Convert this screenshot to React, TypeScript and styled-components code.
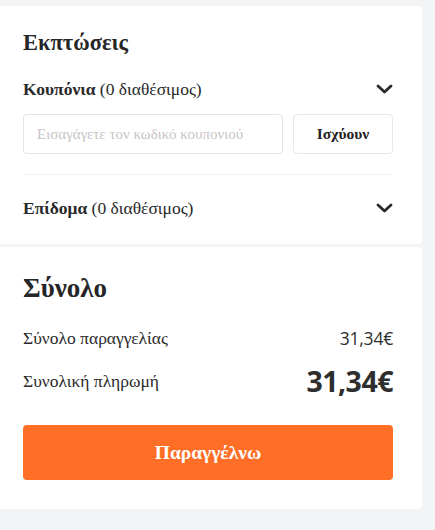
import React from 'react';
import styled, { createGlobalStyle } from 'styled-components';

/*
 * Styles
 */
const GlobalStyle = createGlobalStyle`
  body {
    margin: 0;
    background: #f3f4f6;
    font-family: "Liberation Serif", "Times New Roman", serif;
    color: #2a2a2a;
  }
`;

const Page = styled.div`
  padding: 6px 13px 0 0;
  display: flex;
  flex-direction: column;
  gap: 3px;
`;

const Card = styled.section<{ $bottom: number }>`
  background: #fff;
  border-radius: 0 4px 4px 0;
  padding: 24px 29px ${p => p.$bottom}px 23px;
  display: flex;
  flex-direction: column;
`;

const Title = styled.h2<{ $size: number; $lh: number }>`
  margin: 0;
  font-size: ${p => p.$size}px;
  line-height: ${p => p.$lh}px;
  font-weight: 700;
  color: #262626;
`;

const Toggle = styled.div<{ $top: number }>`
  margin-top: ${p => p.$top}px;
  height: 24px;
  display: flex;
  align-items: center;
  justify-content: space-between;
  font-size: 17.5px;
  b { font-weight: 700; }
`;

const CouponRow = styled.div`
  margin-top: 13px;
  display: flex;
  gap: 10px;
`;

const CodeInput = styled.input`
  flex: 1;
  min-width: 0;
  height: 40px;
  box-sizing: border-box;
  border: 1px solid #e4e4e4;
  border-radius: 4px;
  padding: 0 13px;
  font-family: "Liberation Serif", "Times New Roman", serif;
  font-size: 15px;
  outline: none;
  &::placeholder { color: #c9c3c9; }
`;

const ApplyButton = styled.button`
  width: 100px;
  height: 40px;
  background: #fff;
  border: 1px solid #e8e8e8;
  border-radius: 4px;
  font-family: "Liberation Serif", "Times New Roman", serif;
  font-weight: 700;
  font-size: 15.5px;
  color: #222;
`;

const Divider = styled.hr`
  margin: 20px 0 0;
  border: 0;
  border-top: 1px solid #f0f0f0;
`;

const SumRow = styled.div<{ $top: number; $h: number }>`
  margin-top: ${p => p.$top}px;
  height: ${p => p.$h}px;
  display: flex;
  align-items: center;
  justify-content: space-between;
  font-size: 17.5px;
  color: #2a2a2a;
`;

const Amount = styled.span<{ $big?: boolean }>`
  font-family: "Open Sans", "Noto Sans", sans-serif;
  font-size: ${p => (p.$big ? 28.5 : 17.5)}px;
  font-weight: ${p => (p.$big ? 700 : 400)};
  color: #2e2e2e;
  letter-spacing: ${p => (p.$big ? '-0.5px' : '-0.2px')};
`;

const OrderButton = styled.button`
  margin-top: 25px;
  height: 55px;
  border: 0;
  border-radius: 4px;
  background: #ff6e26;
  color: #fff;
  font-family: "Liberation Serif", "Times New Roman", serif;
  font-weight: 700;
  font-size: 19.5px;
`;

/*
 * Component
 */
const Chevron = () => (
  <svg width="17" height="10" viewBox="0 0 17 10">
    <polyline points="2,2 8.5,8 15,2" fill="none" stroke="#2a2a2a" strokeWidth="2.8" strokeLinecap="round" strokeLinejoin="round" />
  </svg>
);

export default function App() {
  return (
    <>
      <GlobalStyle />
      <Page>
        <Card $bottom={24}>
          <Title $size={22.5} $lh={26}>Εκπτώσεις</Title>
          <Toggle $top={21}>
            <span><b>Κουπόνια</b> (0 διαθέσιμος)</span>
            <Chevron />
          </Toggle>
          <CouponRow>
            <CodeInput placeholder="Εισαγάγετε τον κωδικό κουπονιού" />
            <ApplyButton>Ισχύουν</ApplyButton>
          </CouponRow>
          <Divider />
          <Toggle $top={21}>
            <span><b>Επίδομα</b> (0 διαθέσιμος)</span>
            <Chevron />
          </Toggle>
        </Card>
        <Card $bottom={29}>
          <Title $size={27} $lh={34}>Σύνολο</Title>
          <SumRow $top={21} $h={24}>
            <span>Σύνολο παραγγελίας</span>
            <Amount>31,34€</Amount>
          </SumRow>
          <SumRow $top={12} $h={38}>
            <span>Συνολική πληρωμή</span>
            <Amount $big>31,34€</Amount>
          </SumRow>
          <OrderButton>Παραγγέλνω</OrderButton>
        </Card>
      </Page>
    </>
  );
}
